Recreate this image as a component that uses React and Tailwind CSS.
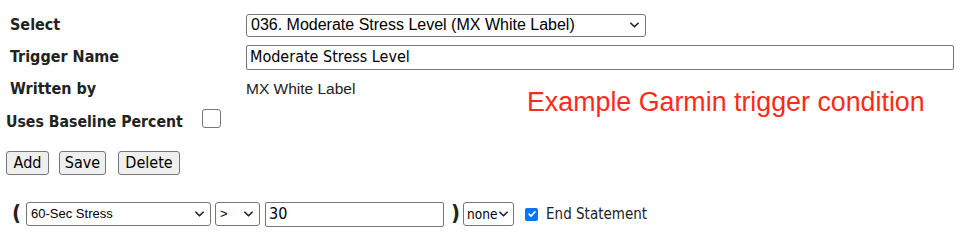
import React from 'react';

const Label = ({ children, className = 'text-[16px]' }) => (
  <div className={`font-bold text-[#222] ${className}`}>{children}</div>
);

const Chevron = () => (
  <svg viewBox="0 0 10 6" className="w-[9px] h-[6px] shrink-0" fill="none" stroke="#222" strokeWidth="1.8" strokeLinecap="round" strokeLinejoin="round">
    <path d="M1 1l4 4 4-4" />
  </svg>
);

const arial = { fontFamily: '"Liberation Sans", Arial, sans-serif' };

const FakeSelect = ({ value, className = '', textClass = '' }) => (
  <div className={`flex items-center justify-between border border-[#767676] rounded-[3px] bg-white pl-[4px] pr-[6px] ${className}`}>
    <span className={`truncate text-black ${textClass}`} style={arial}>{value}</span>
    <Chevron />
  </div>
);

const Btn = ({ children, className = '' }) => (
  <button className={`h-[24px] border border-[#767676] rounded-[3px] bg-[#efefef] text-[16px] text-black leading-none ${className}`}>
    {children}
  </button>
);

export default function App() {
  const tahoma = { fontFamily: '"DejaVu Sans Condensed", "DejaVu Sans", sans-serif' };

  return (
    <div className="relative w-[969px] h-[235px] bg-white" style={tahoma}>
      {/* top form rows */}
      <div className="pt-[13px] pl-[10px] flex flex-col gap-[8px]">
        <div className="flex items-center h-[24px]">
          <Label className="w-[236px] text-[16px]">Select</Label>
          <FakeSelect
            value="036. Moderate Stress Level (MX White Label)"
            className="w-[400px] h-[23px]"
            textClass="text-[16px]"
          />
        </div>
        <div className="flex items-center h-[24px]">
          <Label className="w-[236px] text-[16px]">Trigger Name</Label>
          <div className="w-[708px] h-[25px] border border-[#767676] rounded-[2px] flex items-center pl-[3px] text-[16px] text-black">
            Moderate Stress Level
          </div>
        </div>
        <div className="flex items-center h-[24px]">
          <Label className="w-[236px] text-[16px]">Written by</Label>
          <span className="text-[15.5px] text-[#222]" style={arial}>MX White Label</span>
        </div>
      </div>

      <div className="pl-[6px] mt-[9px] flex items-center gap-[19px]">
        <Label className="text-[15.7px]">Uses Baseline Percent</Label>
        <div className="w-[19px] h-[19px] border border-[#767676] rounded-[3px] bg-white -mt-[7px]" />
      </div>

      <div className="pl-[6px] mt-[17px] flex">
        <Btn className="w-[43px]">Add</Btn>
        <Btn className="w-[47px] ml-[10px]">Save</Btn>
        <Btn className="w-[62px] ml-[12px]">Delete</Btn>
      </div>

      <div className="pl-[12px] mt-[27px] flex items-center">
        <span className="font-bold text-[22px] leading-none text-[#222] -mt-[2px]">(</span>
        <FakeSelect value="60-Sec Stress" className="w-[185px] h-[24px] ml-[5px]" textClass="text-[13px]" />
        <FakeSelect value=">" className="w-[45px] h-[24px] ml-[4px]" textClass="text-[13px]" />
        <div className="w-[179px] h-[25px] ml-[5px] border border-[#767676] rounded-[2px] flex items-center pl-[3px] text-[16px] text-black">30</div>
        <span className="ml-[7px] font-bold text-[22px] leading-none text-[#222] -mt-[2px]">)</span>
        <div className="ml-[3px] w-[51px] h-[24px] border border-[#767676] rounded-[3px] flex items-center pl-[3px] gap-[2px] text-[13.5px] text-black">
          <span>none</span>
          <Chevron />
        </div>
        <div className="ml-[11px] w-[13px] h-[13px] rounded-[2px] bg-[#0075ff] flex items-center justify-center">
          <svg viewBox="0 0 12 12" className="w-[10px] h-[10px]" fill="none" stroke="white" strokeWidth="2" strokeLinecap="round" strokeLinejoin="round">
            <path d="M2.5 6.2l2.3 2.3 4.7-5" />
          </svg>
        </div>
        <span className="ml-[8px] text-[15px] text-[#222]">End Statement</span>
      </div>

      <div className="absolute left-[527px] top-[85px] text-[26.8px] leading-[34px] text-[#ff2a1a]" style={arial}>
        Example Garmin trigger condition
      </div>
    </div>
  );
}
